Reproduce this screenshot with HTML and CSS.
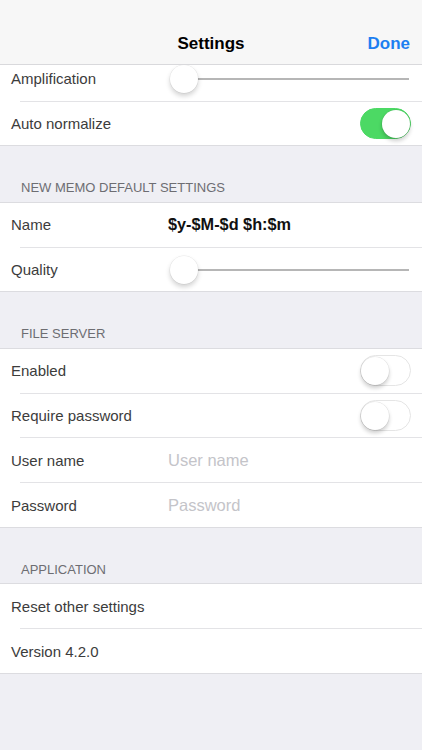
FILE: index.html
```html
<!DOCTYPE html>
<html lang="en">
<head>
<meta charset="utf-8">
<title>Settings</title>
<link rel="stylesheet" href="styles.css">
</head>
<body>
<div class="screen">
  <header class="navbar">
    <span class="nav-spacer"></span>
    <h1 class="nav-title">Settings</h1>
    <button class="nav-done">Done</button>
  </header>

  <main class="content">
    <!-- first group is scrolled partly under the bar -->
    <div class="scroll-clip">
      <section class="group group-scrolled">
        <div class="row">
          <span class="label">Amplification</span>
          <div class="slider"><span class="thumb"></span><span class="track"></span></div>
        </div>
        <div class="row">
          <span class="label">Auto normalize</span>
          <span class="switch on"><span class="knob"></span></span>
        </div>
      </section>
    </div>

    <h2 class="section-title">NEW MEMO DEFAULT SETTINGS</h2>
    <section class="group">
      <div class="row">
        <span class="label">Name</span>
        <span class="value">$y-$M-$d $h:$m</span>
      </div>
      <div class="row">
        <span class="label">Quality</span>
        <div class="slider"><span class="thumb"></span><span class="track"></span></div>
      </div>
    </section>

    <h2 class="section-title">FILE SERVER</h2>
    <section class="group">
      <div class="row">
        <span class="label">Enabled</span>
        <span class="switch"><span class="knob"></span></span>
      </div>
      <div class="row">
        <span class="label">Require password</span>
        <span class="switch"><span class="knob"></span></span>
      </div>
      <div class="row">
        <span class="label">User name</span>
        <span class="placeholder">User name</span>
      </div>
      <div class="row">
        <span class="label">Password</span>
        <span class="placeholder">Password</span>
      </div>
    </section>

    <h2 class="section-title">APPLICATION</h2>
    <section class="group">
      <div class="row">
        <span class="label">Reset other settings</span>
      </div>
      <div class="row">
        <span class="label">Version 4.2.0</span>
      </div>
    </section>
  </main>
</div>
</body>
</html>
```
FILE: styles.css
```css
* { box-sizing: border-box; }

html, body {
  margin: 0;
  padding: 0;
  background: #efeff4;
  font-family: "Liberation Sans", Arial, Helvetica, sans-serif;
}

.screen {
  width: 422px;
  height: 750px;
  overflow: hidden;
  background: #efeff4;
}

/* navigation bar */
.navbar {
  height: 65px;
  background: #f7f7f7;
  border-bottom: 1px solid #d9d9dc;
  display: grid;
  grid-template-columns: 1fr auto 1fr;
  align-items: end;
  padding: 0 12px 10px 12px;
}

.nav-title {
  margin: 0;
  font-size: 17px;
  font-weight: bold;
  color: #000;
  line-height: 20px;
}

.nav-done {
  justify-self: end;
  border: 0;
  background: none;
  padding: 0;
  font-family: inherit;
  font-size: 17px;
  font-weight: bold;
  color: #1d7ff1;
  line-height: 20px;
}

/* grouped list */
.content {
  display: flex;
  flex-direction: column;
}

.scroll-clip {
  height: 81px;
  overflow: hidden;
  display: flex;
  flex-direction: column;
  justify-content: flex-end;
  position: relative;
}

.scroll-clip::after {
  content: "";
  position: absolute;
  left: 0;
  right: 0;
  bottom: 0;
  height: 1px;
  background: #dcdce0;
}

.group {
  background: #fff;
  position: relative;
}

/* hairlines above and below each group */
.group::before,
.group::after {
  content: "";
  position: absolute;
  left: 0;
  right: 0;
  height: 1px;
  background: #dcdce0;
  z-index: 2;
}

.group::before { top: -0.5px; }
.group::after { bottom: -0.5px; }

.group-scrolled::before,
.group-scrolled::after { display: none; }

.group-scrolled { flex-shrink: 0; }

.row {
  height: 44.8px;
  display: flex;
  align-items: center;
  padding: 0 11px;
  position: relative;
}

/* inset separator between rows */
.row + .row::before {
  content: "";
  position: absolute;
  top: -0.5px;
  left: 20px;
  right: 0;
  height: 1px;
  background: #e3e3e6;
}

.label {
  font-size: 15px;
  color: #3c3c3c;
  width: 157px;
  flex-shrink: 0;
}

.value {
  font-size: 16.3px;
  font-weight: bold;
  color: #111;
}

.placeholder {
  font-size: 16.5px;
  color: #c4c4c9;
}

.section-title {
  margin: 0;
  padding: 34px 21px 6.4px 21px;
  font-size: 13px;
  font-weight: normal;
  color: #6d6d72;
  line-height: 16px;
}

/* slider */
.slider {
  flex: 1;
  display: flex;
  align-items: center;
  margin-left: 2px;
  margin-right: 2px;
  position: relative;
}

.thumb {
  width: 28px;
  height: 28px;
  border-radius: 50%;
  background: #fff;
  box-shadow: 0 3px 5px rgba(0, 0, 0, 0.18), 0 0 0 0.5px rgba(0, 0, 0, 0.08);
  flex-shrink: 0;
  position: relative;
  z-index: 1;
}

.track {
  flex: 1;
  height: 2px;
  background: #b6b6b6;
  margin-left: -2px;
}

/* switch */
.switch {
  margin-left: auto;
  width: 51px;
  height: 31px;
  border-radius: 16px;
  background: #fff;
  border: 1.5px solid #e5e5e5;
  display: flex;
  align-items: center;
  padding: 0;
}

.switch .knob {
  width: 28px;
  height: 28px;
  border-radius: 50%;
  background: #fff;
  box-shadow: 0 3px 4px rgba(0, 0, 0, 0.2), 0 0 0 0.5px rgba(0, 0, 0, 0.1);
}

.switch.on {
  background: #4cd964;
  border-color: #4cd964;
  justify-content: flex-end;
}
```
